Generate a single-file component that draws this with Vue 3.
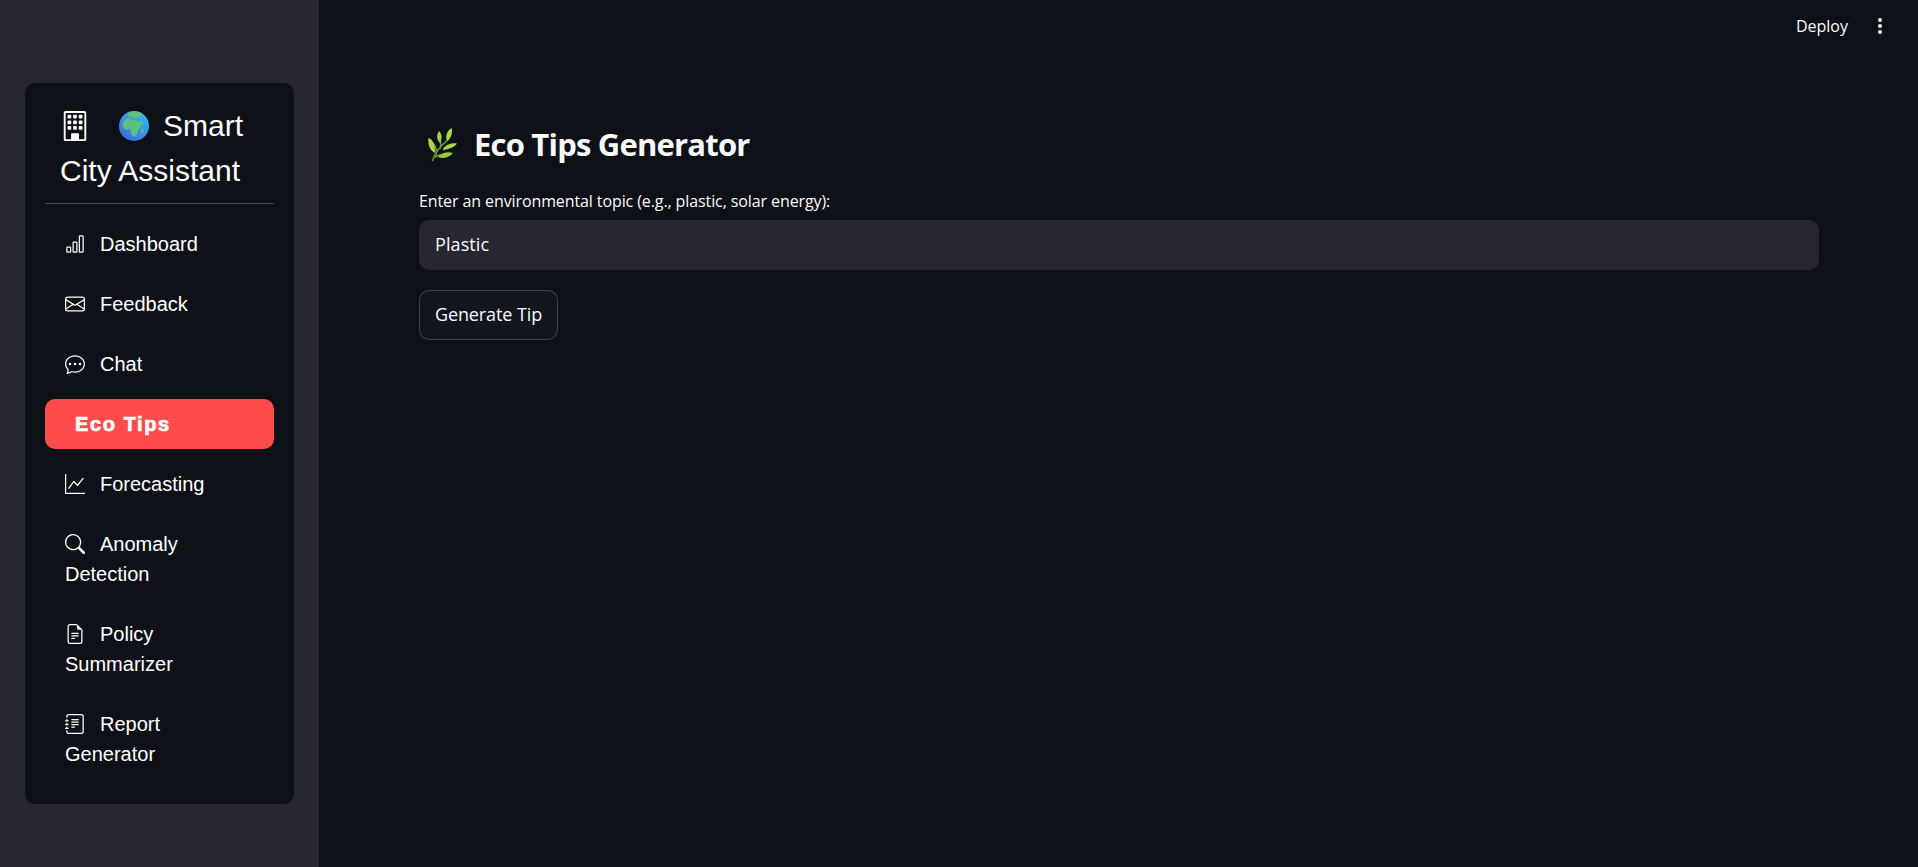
<script setup>
const items = [
  { label: 'Dashboard', paths: ['M4 11H2v3h2v-3zm5-4H7v7h2V7zm5-5v12h-2V2h2zm-2-1a1 1 0 0 0-1 1v12a1 1 0 0 0 1 1h2a1 1 0 0 0 1-1V2a1 1 0 0 0-1-1h-2zM6 7a1 1 0 0 1 1-1h2a1 1 0 0 1 1 1v7a1 1 0 0 1-1 1H7a1 1 0 0 1-1-1V7zm-5 4a1 1 0 0 1 1-1h2a1 1 0 0 1 1 1v3a1 1 0 0 1-1 1H2a1 1 0 0 1-1-1v-3z'] },
  { label: 'Feedback', paths: ['M0 4a2 2 0 0 1 2-2h12a2 2 0 0 1 2 2v8a2 2 0 0 1-2 2H2a2 2 0 0 1-2-2V4Zm2-1a1 1 0 0 0-1 1v.217l7 4.2 7-4.2V4a1 1 0 0 0-1-1H2Zm13 2.383-4.708 2.825L15 11.105V5.383Zm-.034 6.876-5.64-3.471L8 9.583l-1.326-.795-5.64 3.47A1 1 0 0 0 2 13h12a1 1 0 0 0 .966-.741ZM1 11.105l4.708-2.897L1 5.383v5.722Z'] },
  { label: 'Chat', paths: ['M5 8a1 1 0 1 1-2 0 1 1 0 0 1 2 0zm4 0a1 1 0 1 1-2 0 1 1 0 0 1 2 0zm3 1a1 1 0 1 0 0-2 1 1 0 0 0 0 2z', 'm2.165 15.803.02-.004c1.83-.363 2.948-.842 3.468-1.105A9.06 9.06 0 0 0 8 15c4.418 0 8-3.134 8-7s-3.582-7-8-7-8 3.134-8 7c0 1.76.743 3.37 1.97 4.6a10.437 10.437 0 0 1-.524 2.318l-.003.011a10.722 10.722 0 0 1-.244.637c-.079.186.074.394.273.362a21.673 21.673 0 0 0 .693-.125zm.8-3.108a1 1 0 0 0-.287-.801C1.618 10.83 1 9.468 1 8c0-3.192 3.004-6 7-6s7 2.808 7 6c0 3.193-3.004 6-7 6a8.06 8.06 0 0 1-2.088-.272 1 1 0 0 0-.711.074c-.387.196-1.24.57-2.634.893a10.97 10.97 0 0 0 .398-2z'] },
  { label: 'Eco Tips', active: true },
  { label: 'Forecasting', paths: ['M0 0h1v15h15v1H0V0Zm14.817 3.113a.5.5 0 0 1 .07.704l-4.5 5.5a.5.5 0 0 1-.74.037L7.06 6.767l-3.656 5.027a.5.5 0 0 1-.808-.588l4-5.5a.5.5 0 0 1 .758-.06l2.609 2.61 4.15-5.073a.5.5 0 0 1 .704-.07Z'] },
  { label: 'Anomaly Detection', paths: ['M11.742 10.344a6.5 6.5 0 1 0-1.397 1.398h-.001c.03.04.062.078.098.115l3.85 3.85a1 1 0 0 0 1.415-1.414l-3.85-3.85a1.007 1.007 0 0 0-.115-.1zM12 6.5a5.5 5.5 0 1 1-11 0 5.5 5.5 0 0 1 11 0z'] },
  { label: 'Policy Summarizer', paths: ['M5.5 7a.5.5 0 0 0 0 1h5a.5.5 0 0 0 0-1h-5zM5 9.5a.5.5 0 0 1 .5-.5h5a.5.5 0 0 1 0 1h-5a.5.5 0 0 1-.5-.5zm0 2a.5.5 0 0 1 .5-.5h2a.5.5 0 0 1 0 1h-2a.5.5 0 0 1-.5-.5z', 'M9.5 0H4a2 2 0 0 0-2 2v12a2 2 0 0 0 2 2h8a2 2 0 0 0 2-2V4.5L9.5 0zm0 1v2A1.5 1.5 0 0 0 11 4.5h2V14a1 1 0 0 1-1 1H4a1 1 0 0 1-1-1V2a1 1 0 0 1 1-1h5.5z'] },
  { label: 'Report Generator', paths: ['M5 10.5a.5.5 0 0 1 .5-.5h2a.5.5 0 0 1 0 1h-2a.5.5 0 0 1-.5-.5zm0-2a.5.5 0 0 1 .5-.5h5a.5.5 0 0 1 0 1h-5a.5.5 0 0 1-.5-.5zm0-2a.5.5 0 0 1 .5-.5h5a.5.5 0 0 1 0 1h-5a.5.5 0 0 1-.5-.5zm0-2a.5.5 0 0 1 .5-.5h5a.5.5 0 0 1 0 1h-5a.5.5 0 0 1-.5-.5z', 'M3 0h10a2 2 0 0 1 2 2v12a2 2 0 0 1-2 2H3a2 2 0 0 1-2-2v-1h1v1a1 1 0 0 0 1 1h10a1 1 0 0 0 1-1V2a1 1 0 0 0-1-1H3a1 1 0 0 0-1 1v1H1V2a2 2 0 0 1 2-2z', 'M1 5v-.5a.5.5 0 0 1 1 0V5h.5a.5.5 0 0 1 0 1h-2a.5.5 0 0 1 0-1H1zm0 3v-.5a.5.5 0 0 1 1 0V8h.5a.5.5 0 0 1 0 1h-2a.5.5 0 0 1 0-1H1zm0 3v-.5a.5.5 0 0 1 1 0v.5h.5a.5.5 0 0 1 0 1h-2a.5.5 0 0 1 0-1H1z'] }
]
</script>

<template>
  <div class="page">
    <aside class="sidebar">
      <div class="card">
        <div class="brand">
          <svg class="b-icon" viewBox="0 0 16 16" fill="currentColor">
            <path d="M4 2.5a.5.5 0 0 1 .5-.5h1a.5.5 0 0 1 .5.5v1a.5.5 0 0 1-.5.5h-1a.5.5 0 0 1-.5-.5v-1Zm3 0a.5.5 0 0 1 .5-.5h1a.5.5 0 0 1 .5.5v1a.5.5 0 0 1-.5.5h-1a.5.5 0 0 1-.5-.5v-1Zm3.5-.5a.5.5 0 0 0-.5.5v1a.5.5 0 0 0 .5.5h1a.5.5 0 0 0 .5-.5v-1a.5.5 0 0 0-.5-.5h-1ZM4 5.5a.5.5 0 0 1 .5-.5h1a.5.5 0 0 1 .5.5v1a.5.5 0 0 1-.5.5h-1a.5.5 0 0 1-.5-.5v-1ZM7.5 5a.5.5 0 0 0-.5.5v1a.5.5 0 0 0 .5.5h1a.5.5 0 0 0 .5-.5v-1a.5.5 0 0 0-.5-.5h-1Zm2.5.5a.5.5 0 0 1 .5-.5h1a.5.5 0 0 1 .5.5v1a.5.5 0 0 1-.5.5h-1a.5.5 0 0 1-.5-.5v-1ZM4.5 8a.5.5 0 0 0-.5.5v1a.5.5 0 0 0 .5.5h1a.5.5 0 0 0 .5-.5v-1a.5.5 0 0 0-.5-.5h-1Zm2.5.5a.5.5 0 0 1 .5-.5h1a.5.5 0 0 1 .5.5v1a.5.5 0 0 1-.5.5h-1a.5.5 0 0 1-.5-.5v-1Zm3.5-.5a.5.5 0 0 0-.5.5v1a.5.5 0 0 0 .5.5h1a.5.5 0 0 0 .5-.5v-1a.5.5 0 0 0-.5-.5h-1Z"/>
            <path d="M2 1a1 1 0 0 1 1-1h10a1 1 0 0 1 1 1v14a1 1 0 0 1-1 1H3a1 1 0 0 1-1-1V1Zm11 0H3v14h3v-2.5a.5.5 0 0 1 .5-.5h3a.5.5 0 0 1 .5.5V15h3V1Z"/>
            <rect x="6" y="12" width="4" height="3.5"/>
          </svg>
          <svg class="globe" viewBox="0 0 30 30">
            <defs>
              <linearGradient id="sea" x1="0.8" y1="0.1" x2="0.2" y2="0.9">
                <stop offset="0" stop-color="#2fb5f5"/>
                <stop offset="1" stop-color="#3f6fdc"/>
              </linearGradient>
            </defs>
            <circle cx="15" cy="15" r="15" fill="url(#sea)"/>
            <path fill="#5fc27a" d="M10 1.500c3-1 7-1.300 10-.3 2 .8 3 1.600 4 2.600l-3 1.200-1.500 1.600-2.800-.4-1 1.400-2.200-.4-1.500-1.600-2.300.4L8.500 4.500ZM4 11.500l3-3.500 3.500-.5 2.300 1.700 3.700-.2 2.700 1.500 3.300-.8 2.500 2.300-1.500 1.800-2 .6-.8 3-2.300 2.800-.6 3.200-2.300 2-2 .2-1.200-3.600-.6-3.300-1.700-1.200L8 19l-3-1.500-1.500-3Z"/>
            <path fill="#5fc27a" d="M22.500 18.500l1.500-.8.600 2.700-1.700 2.400-.9-2Z"/>
          </svg>
          <span class="b-text">Smart City Assistant</span>
        </div>
        <hr class="rule" />
        <nav class="nav">
          <a v-for="item in items" :key="item.label" class="nav-item" :class="{ active: item.active }">
            <svg v-if="item.paths" class="n-icon" viewBox="0 0 16 16" fill="currentColor">
              <path v-for="(d, i) in item.paths" :key="i" :d="d" />
            </svg>
            <span>{{ item.label }}</span>
          </a>
        </nav>
      </div>
    </aside>

    <main class="main">
      <header class="topbar">
        <span class="deploy">Deploy</span>
        <span class="kebab"><i></i><i></i><i></i></span>
      </header>
      <section class="content">
        <h1 class="title">
          <svg class="herb" viewBox="0 0 34 34">
            <path d="M6.500 33C8 26 13 19 23 11M10 27c1-5 0-8-3-12M14 21c1-3 1-5 .5-8M17 22c3-1 6-2 9-4M9 29c5-3 10-3 14-2" fill="none" stroke="#6f9a3c" stroke-width="1.600"/>
            <path fill="#a9d94b" d="M2.500 10C6 11 9 15 9 25 4.500 23 1.500 17 2.500 10Z"/>
            <path fill="#9fd245" d="M13 3C16 6 16.500 10 14 15 11 12 10 7 13 3Z"/>
            <path fill="#a9d94b" d="M25.500 0C27 4 25.500 10 21 13 19 8 21 3 25.500 0Z"/>
            <path fill="#a4d648" d="M31 15.500C28 20 22 21.500 17 21 19 17 25 14.500 31 15.500Z"/>
            <path fill="#93c93f" d="M27 25C23 30 16 31 12 29 15 25 22 23 27 25Z"/>
          </svg>
          <span>Eco Tips Generator</span>
        </h1>
        <label class="label" for="topic">Enter an environmental topic (e.g., plastic, solar energy):</label>
        <input id="topic" class="input" value="Plastic" />
        <button class="btn">Generate Tip</button>
      </section>
    </main>
  </div>
</template>

<style>
html, body { margin: 0; background: #0e1117; overflow: hidden; }
</style>

<style scoped>
.page {
  display: flex;
  height: 867px;
  background: #0e1117;
  color: #fafafa;
  font-family: "Open Sans", "Noto Sans", sans-serif;
}
.sidebar {
  width: 319px;
  flex: none;
  box-sizing: border-box;
  background: #262730;
  padding: 83px 25px 0;
}
.card {
  background: #0e1117;
  border-radius: 10px;
  padding: 20px 20px 25px;
  font-family: "Liberation Sans", Arial, sans-serif;
  color: #fff;
}
.brand {
  padding: 0 10px 0 15px;
  font-size: 30px;
  line-height: 45px;
  height: 90px;
}
.b-icon, .globe { display: inline-block; width: 30px; height: 30px; vertical-align: -5px; }
.globe { margin: 0 14px 0 29px; }
.rule {
  border: 0;
  border-top: 1px solid #45474d;
  margin: 10px 0 15px;
}
.nav { display: flex; flex-direction: column; gap: 10px; }
.nav-item {
  display: block;
  padding: 10px 20px;
  border-radius: 10px;
  font-size: 20px;
  line-height: 30px;
}
.n-icon { width: 20px; height: 20px; vertical-align: -3px; margin-right: 15px; }
.nav-item.active {
  background: #ff4b4b;
  font-weight: 700;
  padding-left: 30px;
  letter-spacing: 1.6px;
  -webkit-text-stroke: 0.7px #fff;
}
.main { flex: 1; min-width: 0; display: flex; flex-direction: column; }
.topbar {
  height: 52px;
  display: flex;
  align-items: center;
  justify-content: flex-end;
  padding-right: 35px;
}
.deploy { font-size: 16px; margin-right: 30px; }
.kebab { display: flex; flex-direction: column; gap: 2px; width: 5px; }
.kebab i { width: 4px; height: 4px; border-radius: 50%; background: #fafafa; }
.content { padding: 0 99px 0 100px; display: flex; flex-direction: column; align-items: flex-start; }
.title {
  margin: 69px 0 0;
  height: 46px;
  display: flex;
  align-items: center;
  font-size: 31px;
  font-weight: 700;
  letter-spacing: -0.8px;
  line-height: 46px;
}
.herb { width: 34px; height: 34px; margin: 1px 14px 0 7px; flex: none; }
.label { margin-top: 22px; font-size: 16px; letter-spacing: -0.1px; line-height: 24px; height: 31px; }
.input {
  box-sizing: border-box;
  width: 100%;
  height: 50px;
  border: 0;
  border-radius: 10px;
  background: #262730;
  color: #fafafa;
  font: inherit;
  font-size: 18px;
  letter-spacing: 0.1px;
  padding: 0 16px 2px;
  outline: none;
}
.btn {
  margin-top: 20px;
  box-sizing: border-box;
  width: 139px;
  height: 50px;
  border: 1px solid rgba(250, 250, 250, 0.2);
  border-radius: 10px;
  background: #13161d;
  color: #fafafa;
  font: inherit;
  font-size: 18px;
  letter-spacing: -0.1px;
  padding: 0 0 2px;
}
</style>
